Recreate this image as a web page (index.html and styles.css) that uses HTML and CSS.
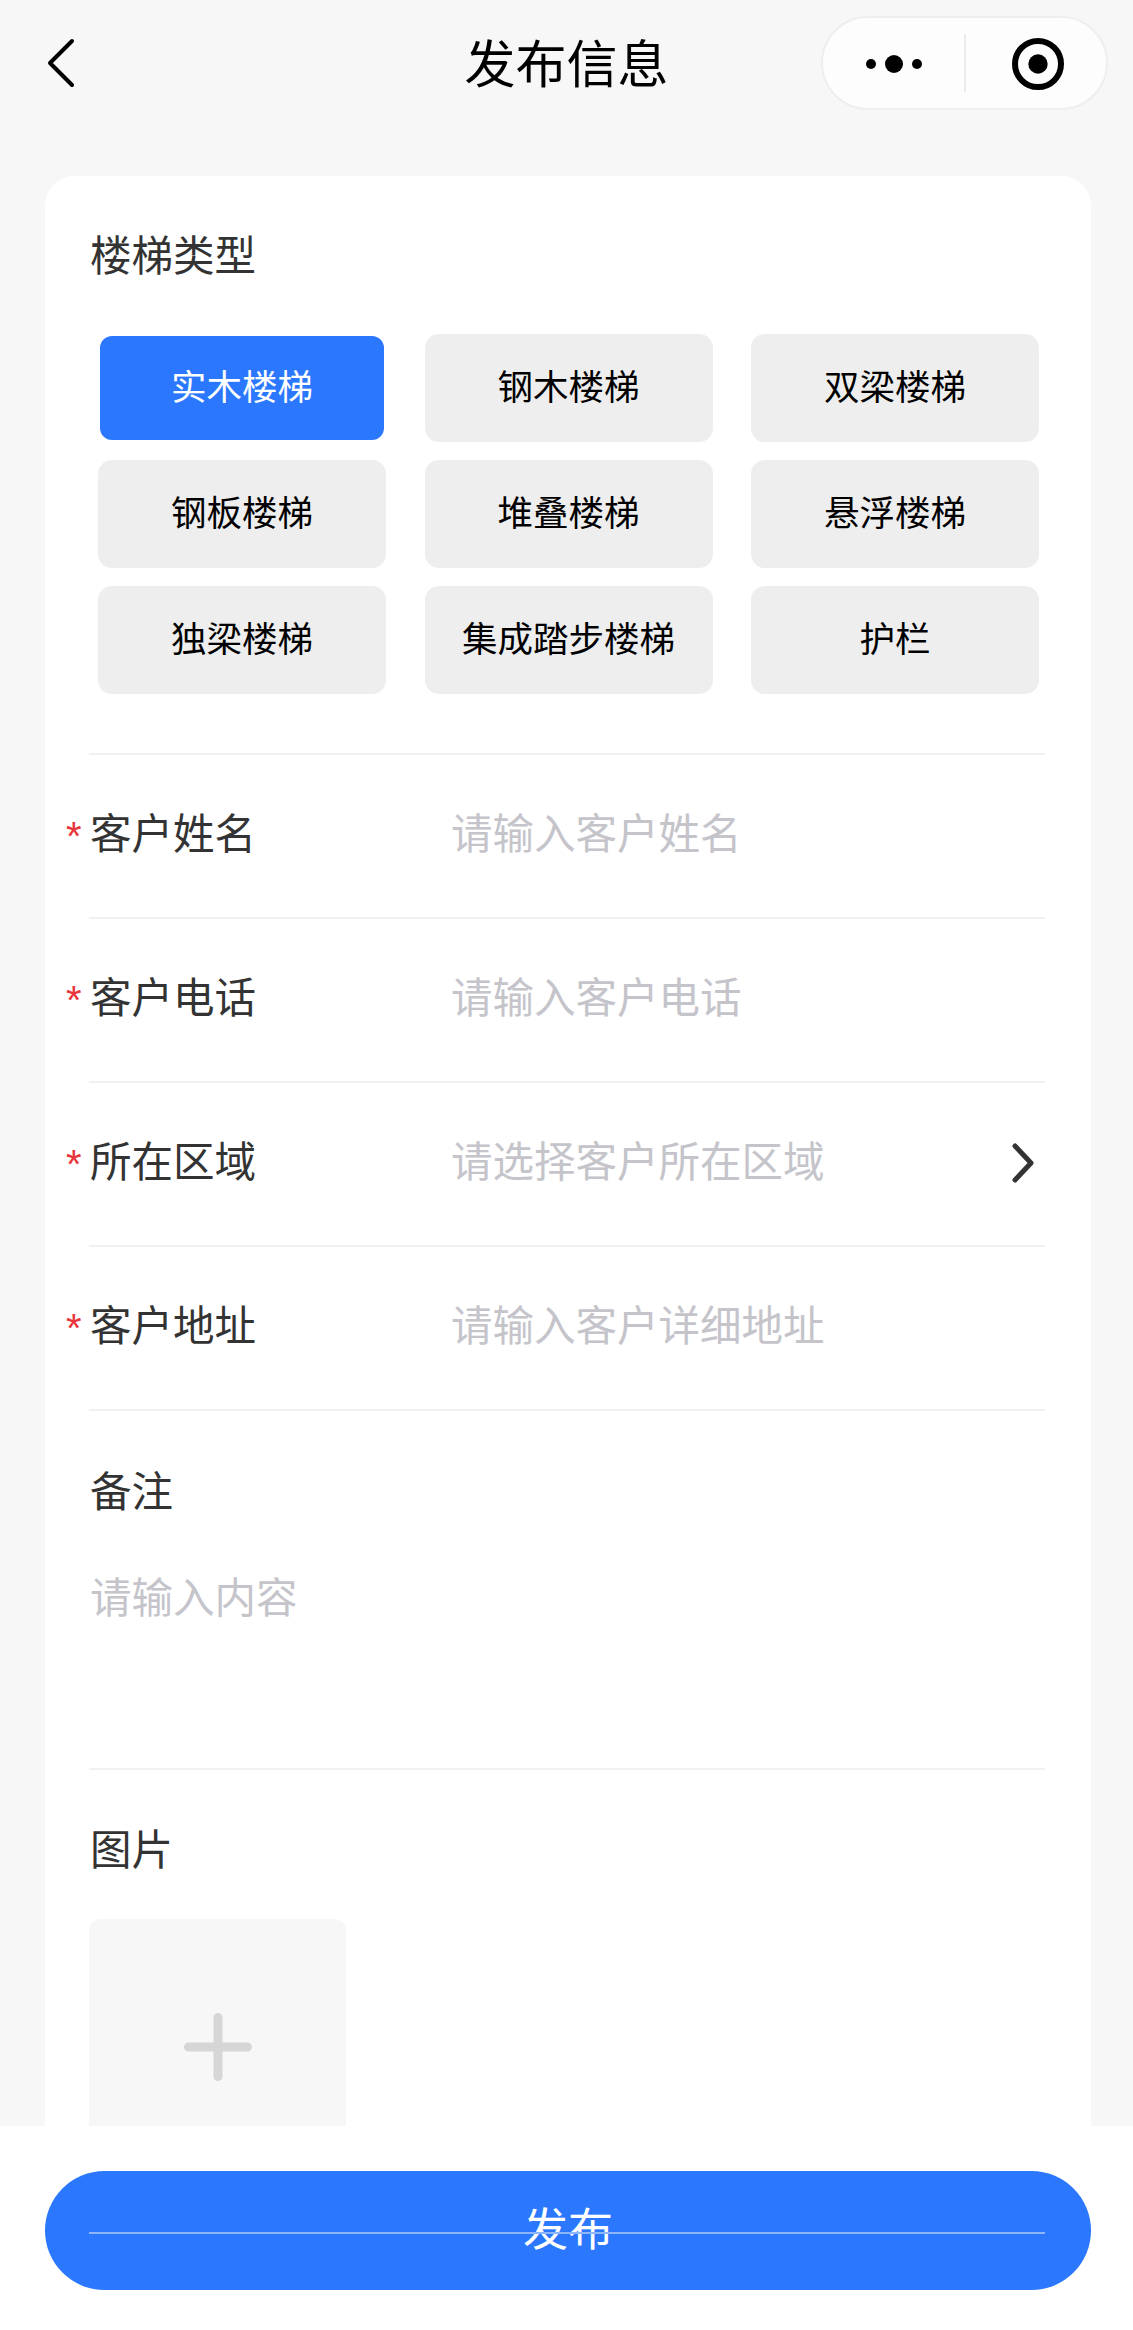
FILE: index.html
```html
<!DOCTYPE html>
<html lang="zh-CN">
  <head>
    <meta charset="UTF-8" />
    <meta name="viewport" content="width=device-width, initial-scale=1.0" />
    <link rel="stylesheet" href="styles.css">
    <title>发布信息</title>
  </head>
  <body>
    <header class="navbar">
      <svg class="back" width="30" height="50" viewBox="0 0 30 50">
        <path d="M27 3 L5 25 L27 47" fill="none" stroke="#000" stroke-width="4" stroke-linecap="round" stroke-linejoin="round" />
      </svg>
      <h1>发布信息</h1>
      <div class="capsule">
        <svg class="capsule-more" width="60" height="24" viewBox="0 0 60 24">
          <circle cx="7" cy="12" r="5" />
          <circle cx="30" cy="12" r="9" />
          <circle cx="53" cy="12" r="5" />
        </svg>
        <span class="capsule-line"></span>
        <svg class="capsule-close" width="54" height="54" viewBox="0 0 54 54">
          <circle cx="27" cy="27" r="23" fill="none" stroke="#000" stroke-width="6" />
          <circle cx="27" cy="27" r="9.700" />
        </svg>
      </div>
    </header>

    <main class="card">
      <section class="types">
        <div class="label">楼梯类型</div>
        <div class="type-grid">
          <div class="type active">实木楼梯</div>
          <div class="type">钢木楼梯</div>
          <div class="type">双梁楼梯</div>
          <div class="type">钢板楼梯</div>
          <div class="type">堆叠楼梯</div>
          <div class="type">悬浮楼梯</div>
          <div class="type">独梁楼梯</div>
          <div class="type">集成踏步楼梯</div>
          <div class="type">护栏</div>
        </div>
      </section>

      <div class="row">
        <div class="row-label"><span class="star">*</span>客户姓名</div>
        <div class="placeholder">请输入客户姓名</div>
      </div>
      <div class="row">
        <div class="row-label"><span class="star">*</span>客户电话</div>
        <div class="placeholder">请输入客户电话</div>
      </div>
      <div class="row">
        <div class="row-label"><span class="star">*</span>所在区域</div>
        <div class="placeholder">请选择客户所在区域</div>
        <svg class="arrow" width="24" height="42" viewBox="0 0 24 42">
          <path d="M4 4 L20 21 L4 38" fill="none" stroke="#333" stroke-width="5" stroke-linecap="round" stroke-linejoin="round" />
        </svg>
      </div>
      <div class="row">
        <div class="row-label"><span class="star">*</span>客户地址</div>
        <div class="placeholder">请输入客户详细地址</div>
      </div>

      <section class="remark">
        <div class="label">备注</div>
        <div class="placeholder">请输入内容</div>
      </section>

      <section class="pics">
        <div class="label">图片</div>
        <div class="upload">
          <svg width="68" height="68" viewBox="0 0 68 68">
            <path d="M34 4.500 V63.500 M4.500 34 H63.500" fill="none" stroke="#d6d6d6" stroke-width="9" stroke-linecap="round" />
          </svg>
        </div>
      </section>
    </main>

    <footer class="bottom">
      <button class="submit">发布</button>
    </footer>
  </body>
</html>
```

FILE: styles.css
```css
html,
body {
  margin: 0;
  padding: 0;
}

body {
  position: relative;
  height: 2330px;
  overflow: hidden;
  background: #f7f7f7;
  color: #333;
  font-family: "Noto Sans CJK SC", "Noto Sans", sans-serif;
}

.navbar {
  display: grid;
  grid-template-columns: minmax(0, 1fr) auto minmax(0, 1fr);
  align-items: center;
  height: 126px;
  padding: 0 25px;
}

.navbar h1 {
  margin: 0 0 4px;
  font-size: 51px;
  font-weight: 400;
  color: #000;
}

.back {
  display: block;
  margin-left: 20px;
}

.capsule {
  display: flex;
  align-items: center;
  justify-self: end;
  box-sizing: border-box;
  width: 287px;
  height: 94px;
  padding-left: 41px;
  border: 2px solid #eee;
  border-radius: 47px;
  background: #fdfdfd;
}

.capsule svg {
  margin-top: 2px;
}

.capsule-line {
  width: 2px;
  height: 58px;
  margin: 0 45px 0 40px;
  background: #ececec;
}

.card {
  margin: 50px 42px 0 45px;
  padding: 0 46px 0 44px;
  border-radius: 30px;
  background: #fff;
}

.label {
  font-size: 41.500px;
  line-height: 60px;
  padding-left: 1px;
  color: #333;
}

.types {
  padding-top: 47px;
  padding-bottom: 59px;
}

.type-grid {
  display: grid;
  grid-template-columns: repeat(3, 288px);
  gap: 18px 38.500px;
  margin: 51px 0 0 9px;
}

.type {
  box-sizing: border-box;
  height: 108px;
  line-height: 98px;
  border: 2px solid #eee;
  border-radius: 14px;
  background: #eee;
  color: #000;
  font-size: 35.500px;
  text-align: center;
}

.type.active {
  border-color: #fff;
  background: #2b78fe;
  color: #fff;
}

.row {
  display: flex;
  align-items: center;
  box-sizing: border-box;
  height: 164px;
  padding-bottom: 10px;
  border-top: 2px solid #f1f1f1;
}

.row-label {
  display: flex;
  align-items: center;
  width: 362px;
  padding-left: 1px;
  box-sizing: border-box;
  font-size: 41.500px;
  line-height: 60px;
  color: #333;
}

.star {
  width: 24px;
  margin-left: -24px;
  padding-top: 10px;
  color: #e8343a;
  font-family: "Liberation Sans", sans-serif;
  font-size: 40px;
  line-height: 40px;
}

.placeholder {
  font-size: 41.500px;
  line-height: 60px;
  color: #c4c4ca;
}

.arrow {
  margin: 7px 10px 0 auto;
}

.remark {
  box-sizing: border-box;
  height: 359px;
  padding-top: 48px;
  border-top: 2px solid #f1f1f1;
}

.remark .placeholder {
  margin-top: 46px;
  padding-left: 1px;
}

.pics {
  padding-top: 47px;
  border-top: 2px solid #f1f1f1;
}

.upload {
  display: flex;
  align-items: center;
  justify-content: center;
  width: 257px;
  height: 256px;
  margin-top: 42px;
  border-radius: 12px;
  background: #f7f7f7;
}

.bottom {
  position: absolute;
  left: 0;
  right: 0;
  bottom: 0;
  height: 204px;
  background: #fff;
}

.submit {
  position: relative;
  display: block;
  width: 1046px;
  height: 119px;
  margin: 45px 0 0 45px;
  padding: 0 0 9px;
  border: 0;
  border-radius: 60px;
  background: #2b78fe;
  color: #fff;
  font-family: inherit;
  font-size: 45px;
}

.submit::before {
  content: "";
  position: absolute;
  left: 44px;
  right: 46px;
  top: 61px;
  height: 2px;
  background: #8db6fe;
}
```
